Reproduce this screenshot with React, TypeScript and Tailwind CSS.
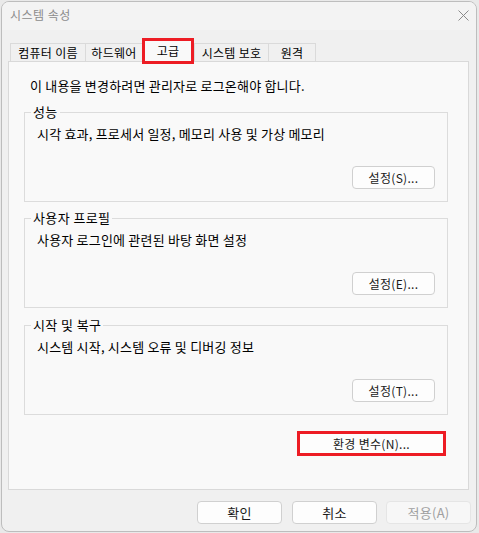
import React from "react";

function Group({ title, desc, btn }: { title: string; desc: string; btn: string }) {
  return (
    <div className="relative flex flex-col w-[424px] h-[90px] border border-[#dcdcdc]">
      <span className="absolute left-[6px] top-[-9px] px-[2px] bg-[#f9f9f9] leading-[16px] text-[13px] tracking-[0.4px]">{title}</span>
      <div className="pt-[13px] pl-[12px] leading-[16px] text-[13px] tracking-[0.2px]">{desc}</div>
      <button className="self-end mr-[12px] mt-[24px] w-[83px] h-[23px] rounded-[4px] border border-[#d0d0d0] bg-[#fdfdfd] text-[#1a1a1a] leading-[16px]">
        {btn}
      </button>
    </div>
  );
}

export default function App() {
  return (
    <div className="w-[479px] h-[533px] bg-[#e9e9e9] pt-[1px] pl-[1px] font-['Noto_Sans_CJK_KR',sans-serif] text-[12px] tracking-[0.3px] text-black">
      <div className="w-[476px] h-[531px] rounded-[8px] border border-[#bdbdbd] bg-[#f0f0f0] overflow-hidden flex flex-col">
        {/* title bar */}
        <div className="h-[28px] flex items-center justify-between pl-[8px] pr-[7px] bg-[#f3f3f3]">
          <span className="text-[#8c8c8c] leading-[16px] mt-[-2px] tracking-[0.5px]">시스템 속성</span>
          <svg width="11" height="11" viewBox="0 0 11 11" className="mt-[-2px]">
            <path d="M0.5 0.5 L10.5 10.5 M10.5 0.5 L0.5 10.5" stroke="#8a8a8a" strokeWidth="1" />
          </svg>
        </div>
        {/* tabs + pane */}
        <div className="ml-[6px] w-[461px] flex flex-col">
          <div className="h-[31px] flex items-end pl-[2px]">
            <div className="w-[75px] h-[18px] border-l border-t border-[#dadada] flex items-center justify-center leading-[16px]">컴퓨터 이름</div>
            <div className="w-[57px] h-[18px] border-l border-t border-[#dadada] flex items-center justify-center leading-[16px]">하드웨어</div>
            <div className="relative z-10 w-[52px] h-[26px] mb-[-3px] border-[3px] border-[#ed1c24] bg-[#f9f9f9] flex items-start justify-center pt-[2px] leading-[16px]">고급</div>
            <div className="w-[74px] h-[18px] border-l border-t border-[#dadada] flex items-center justify-center leading-[16px]">시스템 보호</div>
            <div className="w-[48px] h-[18px] border-l border-t border-r border-[#dadada] flex items-center justify-center leading-[16px]">원격</div>
          </div>
          <div className="h-[429px] border border-[#d9d9d9] bg-[#f9f9f9] flex flex-col">
            <div className="pt-[16px] pl-[21px] leading-[16px] text-[13px] tracking-[0.2px]">이 내용을 변경하려면 관리자로 로그온해야 합니다.</div>
            <div className="ml-[15px] mt-[18px] flex flex-col">
              <Group title="성능" desc="시각 효과, 프로세서 일정, 메모리 사용 및 가상 메모리" btn="설정(S)..." />
              <div className="mt-[16px]">
                <Group title="사용자 프로필" desc="사용자 로그인에 관련된 바탕 화면 설정" btn="설정(E)..." />
              </div>
              <div className="mt-[17px]">
                <Group title="시작 및 복구" desc="시스템 시작, 시스템 오류 및 디버깅 정보" btn="설정(T)..." />
              </div>
            </div>
            <div className="ml-[288px] mt-[16px] w-[149px] h-[25px] border-[3px] border-[#ed1c24] bg-[#fdfdfd] flex items-center justify-center leading-[16px] text-[#1a1a1a]">
              환경 변수(N)...
            </div>
          </div>
        </div>
        {/* bottom buttons */}
        <div className="mt-[11px] flex">
          <button className="ml-[195px] w-[85px] h-[23px] rounded-[4px] border border-[#d0d0d0] bg-[#fdfdfd] text-[#1a1a1a] leading-[16px] text-[13px]">확인</button>
          <button className="ml-[10px] w-[85px] h-[23px] rounded-[4px] border border-[#d0d0d0] bg-[#fdfdfd] text-[#1a1a1a] leading-[16px] text-[13px]">취소</button>
          <button className="ml-[9px] w-[85px] h-[23px] rounded-[4px] border border-[#e5e5e5] bg-[#f7f7f7] text-[#a0a0a0] leading-[16px] text-[13px]">적용(A)</button>
        </div>
      </div>
    </div>
  );
}
